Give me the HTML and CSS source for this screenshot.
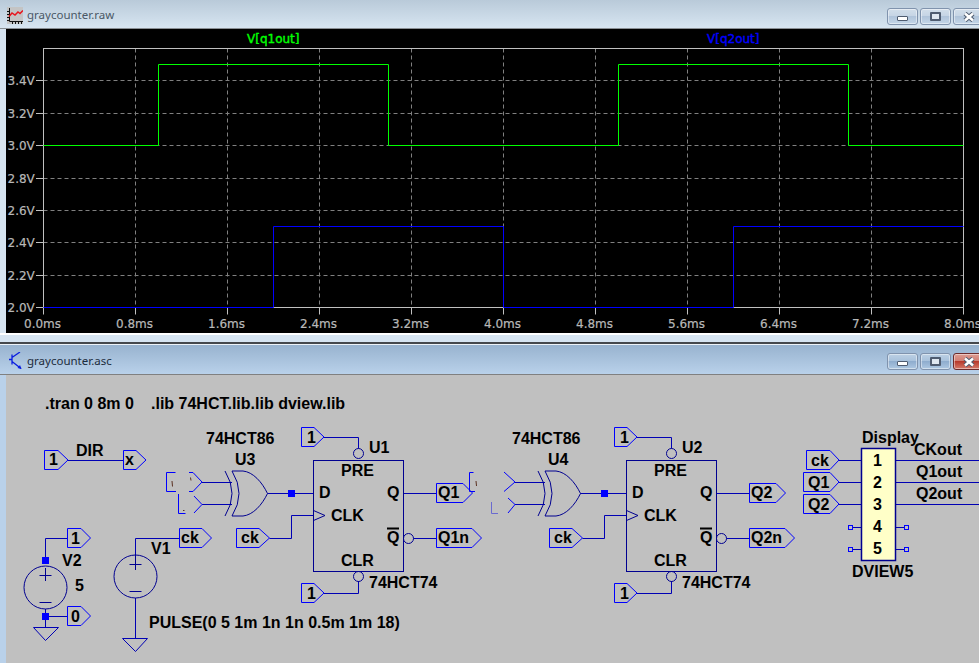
FILE: index.html
```html
<!DOCTYPE html>
<html lang="en">
<head>
<meta charset="utf-8">
<title>graycounter</title>
<link rel="stylesheet" href="styles.css">
</head>
<body>
<section class="win win-plot">
  <header class="titlebar">
    <svg class="app-icon" width="16" height="17" viewBox="0 0 16 17">
      <rect class="ic-bg" width="16" height="17"/>
      <path class="ic-axis" d="M2.500 1v13.500H16M0 13.500h2M0 10.500h2M0 7.500h2M0 4.500h2M5.500 15v2M8.500 15v2M11.500 15v2M14.500 15v2"/>
      <path class="ic-curve" d="M2 9.500L5 6l3 2 3-3 2 1.500 3-3"/>
    </svg>
    <span class="title">graycounter.raw</span>
    <div class="controls">
      <button class="btn"><i class="min-glyph"></i></button>
      <button class="btn"><i class="max-glyph"></i></button>
      <button class="btn">
        <svg class="x-glyph" width="12" height="10" viewBox="0 0 12 10"><path class="x-outer" d="M2 1.500l8 7M10 1.500l-8 7"/><path class="x-inner" d="M2 1.500l8 7M10 1.500l-8 7"/></svg>
      </button>
    </div>
  </header>
  <div class="plot-wrap">
    <svg class="plot" width="973" height="304" viewBox="6 29 973 304">
      <path class="grid" d="M43.500 80.500H963.500M43.500 113.500H963.500M43.500 145.500H963.500M43.500 178.500H963.500M43.500 210.500H963.500M43.500 242.500H963.500M43.500 275.500H963.500"/>
      <path class="grid" d="M135.500 48.500V307.500M227.500 48.500V307.500M319.500 48.500V307.500M411.500 48.500V307.500M503.500 48.500V307.500M595.500 48.500V307.500M687.500 48.500V307.500M779.500 48.500V307.500M871.500 48.500V307.500"/>
      <rect class="frame" x="43.500" y="48.500" width="920" height="259"/>
      <path class="frame" d="M36 80.500h7.500M36 113.500h7.500M36 145.500h7.500M36 178.500h7.500M36 210.500h7.500M36 242.500h7.500M36 275.500h7.500M36 307.500h7.500"/>
      <path class="frame" d="M43.500 307.500v7M135.500 307.500v7M227.500 307.500v7M319.500 307.500v7M411.500 307.500v7M503.500 307.500v7M595.500 307.500v7M687.500 307.500v7M779.500 307.500v7M871.500 307.500v7M963.500 307.500v7"/>
      <path class="trace-green" d="M43.500 145.500H158.500V64.500H388.500V145.500H618.500V64.500H848.500V145.500H963.500"/>
      <path class="trace-blue" d="M43.500 307.500H273.500V226.500H503.500V307.500H733.500V226.500H963.500"/>
      <text class="axis" x="7.500" y="85">3.4V</text>
      <text class="axis" x="7.500" y="118">3.2V</text>
      <text class="axis" x="7.500" y="150">3.0V</text>
      <text class="axis" x="7.500" y="183">2.8V</text>
      <text class="axis" x="7.500" y="215">2.6V</text>
      <text class="axis" x="7.500" y="247">2.4V</text>
      <text class="axis" x="7.500" y="280">2.2V</text>
      <text class="axis" x="7.500" y="312">2.0V</text>
      <text class="axis" x="24" y="328">0.0ms</text>
      <text class="axis" x="116" y="328">0.8ms</text>
      <text class="axis" x="208" y="328">1.6ms</text>
      <text class="axis" x="300" y="328">2.4ms</text>
      <text class="axis" x="392" y="328">3.2ms</text>
      <text class="axis" x="484" y="328">4.0ms</text>
      <text class="axis" x="576" y="328">4.8ms</text>
      <text class="axis" x="668" y="328">5.6ms</text>
      <text class="axis" x="760" y="328">6.4ms</text>
      <text class="axis" x="852" y="328">7.2ms</text>
      <text class="axis" x="944" y="328">8.0ms</text>
      <text class="label-green" x="247" y="43">V[q1out]</text>
      <text class="label-blue" x="707" y="43">V[q2out]</text>
    </svg>
  </div>
  <div class="win-foot"></div>
</section>
<div class="divider"></div>
<section class="win win-schem">
  <header class="titlebar">
    <svg class="app-icon" width="16" height="18" viewBox="0 0 16 18">
      <path class="tr-icon" d="M3 2.500v10M0 7.500h3M3 5.500L11 0M3 9.500l9 7"/>
      <path class="tr-arrow" d="M12.500 17l-4-1 2.500-3z"/>
    </svg>
    <span class="title">graycounter.asc</span>
    <div class="controls">
      <button class="btn"><i class="min-glyph"></i></button>
      <button class="btn"><i class="max-glyph"></i></button>
      <button class="btn btn-close">
        <svg class="x-glyph" width="12" height="10" viewBox="0 0 12 10"><path class="x-outer" d="M2 1.500l8 7M10 1.500l-8 7"/><path class="x-inner" d="M2 1.500l8 7M10 1.500l-8 7"/></svg>
      </button>
    </div>
  </header>
  <div class="schem-wrap">
    <svg class="schem" width="973" height="288" viewBox="6 375 973 288">
      <!-- wires -->
      <path class="wire" d="M68 460.500H123.500"/>
      <path class="wire" d="M45.500 560V538.500H67.500M45.500 609V628M45.500 616.500H67.500"/>
      <path class="wire" d="M135.500 555V538.500H179.500M135.500 598V638.500"/>
      <path class="wire" d="M202 482.500H232M202 504.500H232M267.500 493.500H313.500"/>
      <path class="wire" d="M269.500 538.500H291.500V515.500H313.500"/>
      <path class="wire" d="M324 437.500H358.500V448.500M358.500 581V593.500H324"/>
      <path class="wire" d="M403.500 493.500H436.500M413.500 538.500H436.500"/>
      <path class="wire" d="M515 482.500H545M515 504.500H545M580.500 493.500H626.500"/>
      <path class="wire" d="M582.500 538.500H604.500V515.500H626.500"/>
      <path class="wire" d="M637 437.500H671.500V448.500M671.500 581V593.500H637"/>
      <path class="wire" d="M716.500 493.500H749.500M726.500 538.500H749.500"/>
      <path class="wire" d="M839 460.500H861.500M839 482.500H861.500M839 504.500H861.500M895.500 460.500H979M895.500 482.500H979M895.500 504.500H979"/>
      <path class="wire" d="M852 527.500H861.500M852 549.500H861.500M895.500 527.500H904.500M895.500 549.500H904.500"/>
      <!-- flags -->
      <path class="flag" d="M44.500 450.500H58L68 460L58 469.500H44.500Z"/>
      <path class="flag" d="M123.500 450.500H136L146 460L136 469.500H123.500Z"/>
      <path class="flag" d="M67.500 528.500H81L90.500 538L81 547.500H67.500Z"/>
      <path class="flag" d="M67.500 606.500H81L90.500 616L81 625.500H67.500Z"/>
      <path class="flag" d="M179.500 528.500H202L211.500 538L202 547.500H179.500Z"/>
      <path class="flag" d="M236.500 528.500H259L269.500 538L259 547.500H236.500Z"/>
      <path class="flag" d="M301.500 427.500H314L324 437L314 446.500H301.500Z"/>
      <path class="flag" d="M301.500 583.500H314L324 593L314 602.500H301.500Z"/>
      <path class="flag" d="M436.500 483.500H463L472.500 493L463 502.500H436.500Z"/>
      <path class="flag" d="M436.500 528.500H472L481.500 538L472 547.500H436.500Z"/>
      <path class="flag" d="M549.500 528.500H572L582.500 538L572 547.500H549.500Z"/>
      <path class="flag" d="M614.500 427.500H627L637 437L627 446.500H614.500Z"/>
      <path class="flag" d="M614.500 583.500H627L637 593L627 602.500H614.500Z"/>
      <path class="flag" d="M749.500 483.500H776L785.500 493L776 502.500H749.500Z"/>
      <path class="flag" d="M749.500 528.500H785L794.500 538L785 547.500H749.500Z"/>
      <path class="flag" d="M806.500 450.500H830L839 460L830 469.500H806.500Z"/>
      <path class="flag" d="M803.500 472.500H830L839 482L830 491.500H803.500Z"/>
      <path class="flag" d="M803.500 494.500H830L839 504L830 513.500H803.500Z"/>
      <!-- redraw glitches around the gate inputs -->
      <path class="flag" d="M175.500 472.500H166.500V491.500H176M178.500 494V513.500H185.500M189 472.500H193L202 482L193 491.500H189M194 496L202 504.500L194 513"/>
      <path class="flag" d="M469.500 491.500V472.500H473.500M469.500 491.500H475"/>
      <path class="flag" d="M504 472L515 482L504 491.500M508 498L515 504.500L508 513"/>
      <path class="flag-faint" d="M491.500 502V513.500H498"/>
      <path class="speck" d="M172 481l.5 5.500M190.500 477.500l.5 3M183 510.500h1.500M476 481l.5 5"/>
      <!-- grounds -->
      <path class="wire" d="M33.500 627.500H58.500L45.500 640.500Z"/>
      <path class="wire" d="M122.500 638.500H147.500L135.500 651.500Z"/>
      <!-- sources -->
      <circle class="part" cx="45.500" cy="587.500" r="21.500"/>
      <path class="part" d="M39.500 575.500H51.500M45.500 568V581M39.500 602.500H51.500"/>
      <circle class="part" cx="135.500" cy="576.500" r="21.500"/>
      <path class="part" d="M129.500 564.500H141.500M135.500 555V570M129.500 591.500H141.500"/>
      <!-- gates -->
      <path class="part" d="M225 471Q239 493.500 225 516M232 471Q246 493.500 232 516M232 471H243C253 472 262 482 267.500 493.500C262 505 253 515 243 516H232"/>
      <path class="part" d="M538 471Q552 493.500 538 516M545 471Q559 493.500 545 516M545 471H556C566 472 575 482 580.500 493.500C575 505 566 515 556 516H545"/>
      <!-- flip-flops -->
      <rect class="part" x="313.500" y="460.500" width="90" height="111"/>
      <circle class="part" cx="358.500" cy="453.500" r="5"/>
      <circle class="part" cx="358.500" cy="576.500" r="5"/>
      <circle class="part" cx="408.500" cy="538.500" r="5"/>
      <path class="part" d="M313.500 510.500L325 515.500L313.500 520.500"/>
      <rect class="part" x="626.500" y="460.500" width="90" height="111"/>
      <circle class="part" cx="671.500" cy="453.500" r="5"/>
      <circle class="part" cx="671.500" cy="576.500" r="5"/>
      <circle class="part" cx="721.500" cy="538.500" r="5"/>
      <path class="part" d="M626.500 510.500L638 515.500L626.500 520.500"/>
      <path class="overbar" d="M387 528.500H399M700 528.500H712"/>
      <!-- display -->
      <rect class="disp" x="861.500" y="448.500" width="34" height="112"/>
      <rect class="stub" x="848.500" y="525.500" width="4" height="4"/>
      <rect class="stub" x="848.500" y="547.500" width="4" height="4"/>
      <rect class="stub" x="904.500" y="525.500" width="4" height="4"/>
      <rect class="stub" x="904.500" y="547.500" width="4" height="4"/>
      <!-- junctions -->
      <rect class="dot" x="42.500" y="557.500" width="6" height="6"/>
      <rect class="dot" x="42.500" y="613.500" width="6" height="6"/>
      <rect class="dot" x="288.500" y="490.500" width="6" height="6"/>
      <rect class="dot" x="601.500" y="490.500" width="6" height="6"/>
      <!-- text -->
      <text class="st" x="45" y="409">.tran 0 8m 0</text>
      <text class="st" x="151" y="409">.lib 74HCT.lib.lib dview.lib</text>
      <text class="st" x="76" y="456">DIR</text>
      <text class="st" x="49" y="465">1</text>
      <text class="st" x="125" y="465">x</text>
      <text class="st" x="71" y="544">1</text>
      <text class="st" x="71" y="622">0</text>
      <text class="st" x="62" y="566">V2</text>
      <text class="st" x="75" y="591">5</text>
      <text class="st" x="151" y="554">V1</text>
      <text class="st" x="181" y="543">ck</text>
      <text class="st" x="149" y="628">PULSE(0 5 1m 1n 1n 0.5m 1m 18)</text>
      <text class="st" x="206" y="444">74HCT86</text>
      <text class="st" x="235" y="465">U3</text>
      <text class="st" x="241" y="543">ck</text>
      <text class="st" x="307" y="443">1</text>
      <text class="st" x="307" y="599">1</text>
      <text class="st" x="369" y="453">U1</text>
      <text class="st" x="341" y="476">PRE</text>
      <text class="st" x="319" y="498">D</text>
      <text class="st" x="387" y="498">Q</text>
      <text class="st" x="331" y="521">CLK</text>
      <text class="st" x="387" y="543">Q</text>
      <text class="st" x="341" y="566">CLR</text>
      <text class="st" x="369" y="588">74HCT74</text>
      <text class="st" x="438" y="498">Q1</text>
      <text class="st" x="438" y="543">Q1n</text>
      <text class="st" x="512" y="444">74HCT86</text>
      <text class="st" x="548" y="465">U4</text>
      <text class="st" x="554" y="543">ck</text>
      <text class="st" x="620" y="443">1</text>
      <text class="st" x="620" y="599">1</text>
      <text class="st" x="682" y="453">U2</text>
      <text class="st" x="654" y="476">PRE</text>
      <text class="st" x="632" y="498">D</text>
      <text class="st" x="700" y="498">Q</text>
      <text class="st" x="644" y="521">CLK</text>
      <text class="st" x="700" y="543">Q</text>
      <text class="st" x="654" y="566">CLR</text>
      <text class="st" x="682" y="588">74HCT74</text>
      <text class="st" x="751" y="498">Q2</text>
      <text class="st" x="751" y="543">Q2n</text>
      <text class="st" x="862" y="443">Display</text>
      <text class="st" x="914" y="455">CKout</text>
      <text class="st" x="916" y="477">Q1out</text>
      <text class="st" x="916" y="499">Q2out</text>
      <text class="st" x="811" y="466">ck</text>
      <text class="st" x="808" y="488">Q1</text>
      <text class="st" x="808" y="510">Q2</text>
      <text class="st" x="873" y="466">1</text>
      <text class="st" x="873" y="488">2</text>
      <text class="st" x="873" y="510">3</text>
      <text class="st" x="873" y="532">4</text>
      <text class="st" x="873" y="554">5</text>
      <text class="st" x="852" y="577">DVIEW5</text>
    </svg>
  </div>
</section>
</body>
</html>
```
FILE: styles.css
```css
* { box-sizing: border-box; }
html, body { margin: 0; padding: 0; }
body {
  width: 979px;
  height: 663px;
  overflow: hidden;
  display: flex;
  flex-direction: column;
  background: #d6e4f1;
  font-family: "Noto Sans", "Liberation Sans", sans-serif;
}
.win { display: flex; flex-direction: column; flex: none; }
.titlebar {
  display: flex;
  align-items: center;
  height: 29px;
  padding-left: 7px;
  flex: none;
}
.win-plot .titlebar {
  background: linear-gradient(#b9cad9, #d7e5f1);
  border-bottom: 1px solid #8a8f94;
}
.win-schem .titlebar {
  background: linear-gradient(#98b3cf, #b9d1ea);
}
.app-icon { flex: none; display: block; margin-top: 2px; }
.win-schem .app-icon { margin: 3px 0 0 2px; }
.title {
  margin-left: 4px;
  font-size: 11.500px;
  line-height: 16px;
  margin-top: 2px;
  color: #4a5866;
}
.win-schem .title { margin-left: 2px; color: #1c2c3c; }
.controls {
  display: flex;
  gap: 2px;
  margin-left: auto;
  margin-right: -5px;
  align-self: flex-start;
  padding-top: 8px;
}
.btn {
  width: 31px;
  height: 17px;
  padding: 0;
  display: flex;
  align-items: center;
  justify-content: center;
  border: 1px solid #8093ad;
  border-radius: 3px;
  background: linear-gradient(#d2deea 0, #c6d5e5 45%, #b0c4da 50%, #c4d6e8 100%);
  box-shadow: inset 0 0 0 1px rgba(255, 255, 255, .45);
}
.win-schem .btn { background: linear-gradient(#bcd0e4 0, #a9c2dc 45%, #8fadce 50%, #aec8e2 100%); }
.win-schem .btn-close {
  border-color: #6d2b2b;
  background: linear-gradient(#dd9c92 0, #d27f74 45%, #b83a2c 50%, #d57a6a 100%);
}
.min-glyph {
  display: block;
  width: 11px;
  height: 5px;
  margin-top: 4px;
  background: #fff;
  border: 1px solid #4f5c70;
  border-radius: 1px;
}
.max-glyph {
  display: block;
  width: 11px;
  height: 9px;
  background: #dfe7f0;
  border: 2px solid #4f5c70;
  border-radius: 1px;
}
.x-glyph { display: block; }
.x-outer { fill: none; stroke: #4f5c70; stroke-width: 4.500; }
.x-inner { fill: none; stroke: #fff; stroke-width: 2.500; }
.ic-bg { fill: #c4c4c4; }
.ic-axis { fill: none; stroke: #111; stroke-width: 1; }
.ic-curve { fill: none; stroke: #e8141c; stroke-width: 1.500; }
.tr-icon { fill: none; stroke: #0a1ee0; stroke-width: 1.300; }
.tr-arrow { fill: #0a1ee0; }

.plot-wrap { padding-left: 6px; line-height: 0; }
.plot { display: block; background: #000; }
.win-foot {
  height: 9px;
  background: #d6e4f1;
  border-top: 2px solid #fff;
}
.win-plot { height: 342px; }
.divider {
  height: 3px;
  flex: none;
  background: #45484c;
  border-bottom: 1px solid #eef3f8;
}
.win-schem { flex: 1 1 auto; background: #b9d1ea; }
.schem-wrap {
  padding-left: 6px;
  line-height: 0;
}
.schem {
  display: block;
  background: #c0c0c0;
}
.win-schem .titlebar { border-bottom: 1px solid #808080; height: 30px; }

.grid { fill: none; stroke: #808080; stroke-width: 1; stroke-dasharray: 4 3; }
.frame { fill: none; stroke: #c0c0c0; stroke-width: 1; }
.trace-green { fill: none; stroke: #00ff00; stroke-width: 1; }
.trace-blue { fill: none; stroke: #0000ff; stroke-width: 1; }
.axis {
  font-family: "DejaVu Sans", sans-serif;
  font-size: 12px;
  fill: #b8b8b8;
  stroke: #b8b8b8;
  stroke-width: .2;
}
.label-green, .label-blue {
  font-family: "DejaVu Sans", sans-serif;
  font-size: 12px;
  stroke-width: .4;
}
.label-green { fill: #00ff00; stroke: #00ff00; }
.label-blue { fill: #0000ff; stroke: #0000ff; }

.wire { fill: none; stroke: #0000b4; stroke-width: 1; }
.part { fill: none; stroke: #000090; stroke-width: 1; }
.flag { fill: none; stroke: #0000ff; stroke-width: 1; }
.flag-faint { fill: none; stroke: #6a6ad0; stroke-width: 1; }
.speck { fill: none; stroke: #5a3020; stroke-width: 1; }
.dot { fill: #0000ff; stroke: #0000ff; stroke-width: 1; }
.stub { fill: none; stroke: #0000ff; stroke-width: 1; }
.disp { fill: #ffffc8; stroke: #000090; stroke-width: 1.500; }
.overbar { fill: none; stroke: #000; stroke-width: 2; }
.st {
  font-family: "Liberation Sans", Arial, sans-serif;
  font-weight: 700;
  font-size: 16px;
  fill: #000;
}
```
